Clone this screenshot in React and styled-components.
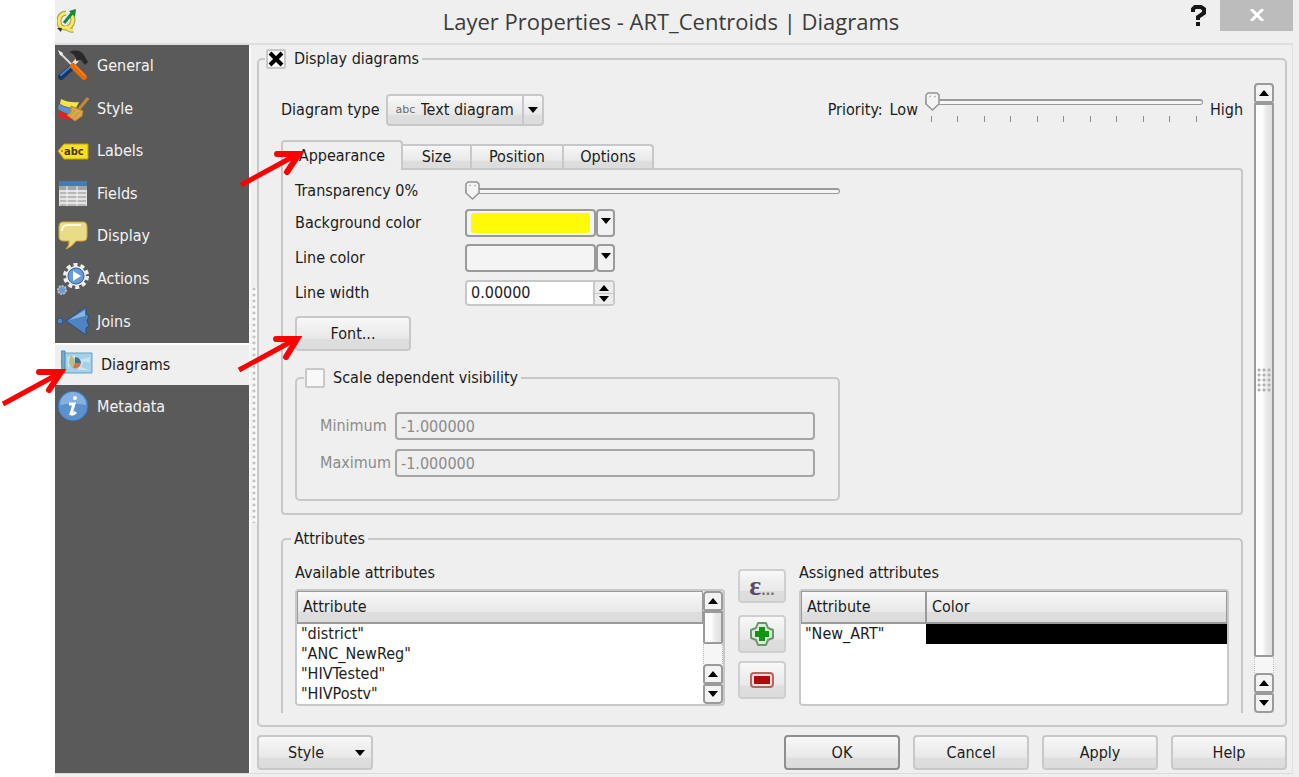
import React, { useState } from 'react';
import styled, { createGlobalStyle, css } from 'styled-components';

const GREY_BG = '#efefef';
const GREY_LINE = '#c8c8ca';
const GREY_EDGE = '#9a9a9a';
const SIDEBAR = '#5a5a5a';
const TEXT = '#1c1c1c';
const RED = '#ff0000';

const raised = 'linear-gradient(#f9f9f9 0%, #f0f0f0 30%, #e9e9e9 65%, #dedede 68%, #dcdcdc 100%)';
const handle = `url("data:image/svg+xml,%3Csvg xmlns='http://www.w3.org/2000/svg' width='15' height='19'%3E%3Cpath d='M3 1H12L14 3V12L7.500 18L1 12V3Z' fill='%23f4f4f4' stroke='%23929292' stroke-width='1.500' stroke-linejoin='round'/%3E%3Cpath d='M4 5l2-1M9 5l2-1' stroke='%23aaa'/%3E%3C/svg%3E")`;
const cross = `url("data:image/svg+xml,%3Csvg xmlns='http://www.w3.org/2000/svg' width='16' height='16'%3E%3Cpath d='M2 2L14 14M14 2L2 14' stroke='%23000' stroke-width='4'/%3E%3C/svg%3E")`;

const GlobalStyle = createGlobalStyle`
  * { box-sizing: border-box; }
  body {
    margin: 0;
    background: #fff;
    color: ${ TEXT };
    font: 16px/20px "DejaVu Sans Condensed", "DejaVu Sans", sans-serif;
    font-stretch: condensed;
  }
  button, input, select { font: inherit; color: inherit; margin: 0; }
`

const Window = styled.div`
  display: flex;
  flex-direction: column;
  min-height: 100vh;
  margin-left: 55px;
  padding: 0 6px 4px 0;
  background: ${ GREY_BG };
`
const TitleBar = styled.header`
  display: grid;
  grid-template-columns: 110px 1fr 116px;
  height: 45px;
  border-bottom: 2px solid #dedede;
`
const Title = styled.h1`
  margin: 0;
  font: 400 22px/43px "Open Sans", "Noto Sans", sans-serif;
  color: #3b3b3b;
  text-align: center;
  white-space: nowrap;
`
const TitleIcon = styled.div`
  padding: 9px 0 0 2px;
`
const TitleButtons = styled.div`
  display: flex;
  justify-content: flex-end;
  align-items: flex-start;
`
const HelpButton = styled.button`
  width: 43px;
  height: 31px;
  padding: 4px 0 0;
  border: 0;
  background: none;
`
const CloseButton = styled.button`
  width: 73px;
  height: 31px;
  padding: 0;
  border: 0;
  background: #bcbcbc;
`
const Body = styled.div`
  display: flex;
  flex: 1;
  border-bottom: 1px solid #dcdcdc;
  border-right: 1px solid #e2e2e2;
`

const Sidebar = styled.nav`
  width: 194px;
  background: ${ SIDEBAR };
`
const NavList = styled.ul`
  display: grid;
  grid-template-rows: repeat(9, 1fr);
  height: 383px;
  margin: 0;
  padding: 0;
  list-style: none;
`
const NavLink = styled.a`
  display: flex;
  align-items: center;
  gap: 8px;
  height: 100%;
  padding-left: 2px;
  color: #f4f4f4;
  text-decoration: none;
  ${ ({ $active }) => $active && css`
    padding-left: 6px;
    background: ${ GREY_BG };
    border-top: 2px solid #fff;
    color: ${ TEXT };
  ` }
`
const Splitter = styled.div`
  display: flex;
  align-items: center;
  width: 8px;
  padding-left: 1px;
  border-left: 2px solid #fafafa;
`
const SplitterDots = styled.div`
  width: 5px;
  height: 236px;
  margin-bottom: 8px;
  background: radial-gradient(circle at 2px 2px, #c4c4c4 1px, #fafafa 2px) 0 0 / 5px 6px;
`
const Content = styled.main`
  flex: 1;
  display: flex;
  flex-direction: column;
  min-width: 0;
  padding: 4px 5px 3px 0;
`

const Group = styled.fieldset`
  min-width: 0;
  margin: 0;
  border: 2px solid ${ GREY_LINE };
  border-radius: 5px;
`
const Legend = styled.legend`
  display: flex;
  align-items: center;
  gap: 8px;
  height: 20px;
  padding: 0 3px 0 1px;
`
const DisplayGroup = styled(Group)`
  flex: 1;
  padding: 14px 11px 12px 22px;
  > legend { margin-left: -16px; }
`
const ScaleGroup = styled(Group)`
  margin-top: 17px;
  padding: 24px 23px 22px;
  > legend { margin-left: -16px; }
`
const AttributesGroup = styled(Group)`
  margin-top: 14px;
  padding: 14px 12px 7px;
  border-bottom: 0;
  border-radius: 5px 5px 0 0;
  > legend { margin-left: -4px; padding-left: 3px; }
`
const CheckBox = styled.input`
  appearance: none;
  width: 20px;
  height: 20px;
  border: 2px solid ${ GREY_LINE };
  border-radius: 2px;
  background: #f8f8f8;
  &:checked { background: #f8f8f8 ${ cross } center no-repeat; }
`
const ScrollArea = styled.div`
  display: flex;
  gap: 11px;
  height: 100%;
`
const Pane = styled.div`
  flex: 1;
  min-width: 0;
`

const TypeRow = styled.div`
  display: flex;
  align-items: center;
  gap: 6px;
  height: 32px;
  margin-top: 11px;
`
const Combo = styled.div`
  display: flex;
  align-items: center;
  width: 158px;
  height: 32px;
  padding-left: 8px;
  border: 2px solid ${ GREY_LINE };
  border-radius: 4px;
  background: ${ raised };
`
const ComboIcon = styled.span`
  width: 20px;
  font: 11px/16px "DejaVu Sans", sans-serif;
  color: #6c6c6c;
`
const ComboSelect = styled.select`
  appearance: none;
  flex: 1;
  min-width: 0;
  padding: 0 0 0 5px;
  border: 0;
  background: none;
`
const ComboArrow = styled.span`
  display: flex;
  align-items: center;
  justify-content: center;
  width: 20px;
  height: 28px;
  border-left: 2px solid ${ GREY_LINE };
`
const Priority = styled.div`
  display: flex;
  align-items: center;
  gap: 7px;
  margin-left: auto;
`
const SliderBox = styled.div`
  width: 278px;
  padding-bottom: 6px;
`
const Range = styled.input`
  appearance: none;
  display: block;
  width: 100%;
  height: 19px;
  background: none;
  &::-webkit-slider-runnable-track {
    height: 6px;
    border: 1px solid ${ GREY_EDGE };
    border-top-width: 2px;
    border-radius: 3px;
    background: #f6f6f6;
  }
  &::-webkit-slider-thumb {
    appearance: none;
    width: 15px;
    height: 19px;
    margin: -9px 0 0 -1px;
    background: ${ handle } no-repeat;
  }
`
const Ticks = styled.div`
  display: flex;
  justify-content: space-between;
  margin-top: 5px;
  padding: 0 6px;
`
const Tick = styled.span`
  width: 1px;
  height: 6px;
  background: #8c8c8c;
`

const TabList = styled.div`
  display: flex;
  align-items: flex-end;
  height: 29px;
  margin-top: 13px;
`
const Tab = styled.button`
  width: ${ ({ $width }) => $width }px;
  height: 24px;
  padding: 0;
  border: 2px solid ${ GREY_LINE };
  border-width: 2px 2px 0 0;
  background: ${ raised };
  &:last-child { border-radius: 0 4px 0 0; }
  ${ ({ $active }) => $active && css`
    position: relative;
    height: 30px;
    margin-bottom: -2px;
    border-left-width: 2px;
    border-radius: 4px 4px 0 0;
    background: ${ GREY_BG };
  ` }
`
const TabPanel = styled.div`
  padding: 10px 12px 12px;
  border: 2px solid ${ GREY_LINE };
  border-radius: 0 4px 4px 4px;
`
const PanelForm = styled.div`
  max-width: 545px;
`
const FieldGrid = styled.div`
  display: grid;
  grid-template-columns: 170px 1fr;
  grid-template-rows: 22px 28px 28px 28px;
  gap: 7px 0;
  align-items: center;
`
const ColorField = styled.div`
  display: flex;
`
const ColorButton = styled.button`
  width: 131px;
  height: 28px;
  padding: 2px 4px;
  border: 2px solid ${ GREY_EDGE };
  border-radius: 4px;
  background: #f4f4f4;
`
const Swatch = styled.span`
  display: block;
  height: 20px;
  border-radius: 3px;
  background: ${ ({ $color }) => $color };
`
const ColorMenu = styled.button`
  display: flex;
  align-items: center;
  justify-content: center;
  width: 19px;
  height: 28px;
  padding: 0 0 4px;
  border: 2px solid ${ GREY_EDGE };
  border-radius: 4px;
  background: #f2f2f2;
`
const SpinBox = styled.div`
  display: flex;
  width: 150px;
  height: 26px;
  border: 2px solid ${ GREY_LINE };
  border-radius: 4px;
  background: #fff;
`
const SpinInput = styled.input`
  flex: 1;
  min-width: 0;
  padding: 0 4px;
  border: 0;
  background: none;
`
const SpinButtons = styled.div`
  display: grid;
  grid-template-rows: 1fr 1fr;
  width: 20px;
  border-left: 2px solid ${ GREY_LINE };
  background: #ededed;
`
const SpinButton = styled.button`
  display: flex;
  align-items: center;
  justify-content: center;
  padding: 0;
  border: 0;
  background: none;
  & + & { border-top: 1px solid ${ GREY_LINE }; }
`
const PushButton = styled.button`
  width: 116px;
  height: 35px;
  padding: 0;
  border: 2px solid ${ ({ $primary }) => ($primary ? '#8f8f8f' : GREY_LINE) };
  border-radius: 4px;
  background: ${ raised };
`
const FontButton = styled(PushButton)`
  display: block;
  margin-top: 9px;
`
const MenuButton = styled(PushButton)`
  display: flex;
  align-items: center;
  justify-content: space-between;
  margin-right: auto;
  padding: 0 6px 0 29px;
`
const LimitRow = styled.div`
  display: grid;
  grid-template-columns: 75px 1fr;
  align-items: center;
  color: #8b8b8b;
  & + & { margin-top: 9px; }
`
const LimitInput = styled.input`
  width: 100%;
  height: 28px;
  padding: 0 4px;
  border: 2px solid #a6a6a6;
  border-radius: 4px;
  background: ${ GREY_BG };
`

const AttributeGrid = styled.div`
  display: grid;
  grid-template-columns: 1fr 48px 1fr;
  gap: 13px;
`
const TableBox = styled.div`
  display: flex;
  align-items: flex-start;
  height: 117px;
  margin-top: 6px;
  border: 2px solid ${ GREY_LINE };
  border-radius: 4px;
  background: #fff;
`
const Table = styled.table`
  flex: 1;
  width: 100%;
  border-collapse: separate;
  border-spacing: 0;
  table-layout: fixed;
`
const TH = styled.th`
  width: ${ ({ $width }) => $width || 'auto' };
  height: 33px;
  padding: 0 5px;
  border: 1px solid ${ GREY_EDGE };
  border-bottom-width: 2px;
  background: ${ raised };
  font-weight: 400;
  text-align: left;
`
const TD = styled.td`
  height: 20px;
  padding: 0 4px;
  line-height: 20px;
  background: ${ ({ $fill }) => $fill || 'none' };
`
const ToolColumn = styled.div`
  display: flex;
  flex-direction: column;
  gap: 8px;
  padding-top: 6px;
`
const ToolButton = styled.button`
  display: flex;
  align-items: center;
  justify-content: center;
  height: 38px;
  padding: 0;
  border: 2px solid #cfcfcf;
  border-radius: 4px;
  background: ${ raised };
  &:first-child { height: 34px; margin-bottom: 4px; }
`
const Epsilon = styled.span`
  font: 700 28px/28px "Liberation Serif", serif;
  color: #5a4a63;
  small { font: 700 16px/16px "Liberation Sans", sans-serif; color: #777; }
`

const Bar = styled.div`
  display: flex;
  flex: none;
  flex-direction: column;
  align-self: stretch;
  width: 20px;
`
const BarButton = styled.button`
  display: flex;
  align-items: center;
  justify-content: center;
  flex: none;
  height: 20px;
  padding: 0;
  border: 2px solid ${ GREY_EDGE };
  border-radius: 4px 4px 2px 2px;
  background: #f3f3f3;
  &:last-child { border-radius: 2px 2px 4px 4px; }
`
const BarThumb = styled.div`
  display: flex;
  flex: ${ ({ $size }) => ($size ? `0 0 ${ $size }px` : '1') };
  align-items: center;
  justify-content: center;
  border: 2px solid ${ GREY_EDGE };
  border-radius: 0 0 2px 2px;
  background: linear-gradient(90deg, #fcfcfc 40%, #ececec 60%, #e0e0e0);
`
const BarTrack = styled.div`
  flex: ${ ({ $size }) => ($size ? `0 0 ${ $size }px` : '1') };
  border: 1px dotted #c0c0c0;
  border-width: 0 1px;
  background: #f6f6f6;
`
const Grip = styled.span`
  width: 15px;
  height: 25px;
  background: radial-gradient(circle at 2px 2px, #b0b0b0 1px, transparent 2px) 0 0 / 5px 5px;
`
const Footer = styled.footer`
  display: flex;
  gap: 13px;
  margin-top: 8px;
`
const Annotations = styled.svg`
  position: absolute;
  top: 0;
  left: 0;
  pointer-events: none;
`

const Arrow = ({ up }) => (
  <svg width="10" height="6" viewBox="0 0 10 6" aria-hidden="true">
    <path d={up ? 'M5 0 10 6H0Z' : 'M0 0H10L5 6Z'} fill="#000" />
  </svg>
)

const icons = {
  General: (
    <>
      <path d="M3 3 17 17" stroke="#d8d8d8" strokeWidth="2" />
      <path d="M1 0 6 3 5 6 3 5Z" fill="#eee" />
      <path d="M14 17 21 9" stroke="#e4e4e4" strokeWidth="4" />
      <path d="M12 2Q22-2 27 5L31 12 28 15 24 10 19 11Q20 5 12 2Z" fill="#292929" />
      <path d="M14 18 4 27" stroke="#183766" strokeWidth="6" strokeLinecap="round" />
      <path d="M13 17 4 25" stroke="#4e7fc2" strokeWidth="2" strokeLinecap="round" />
      <path d="M16 16 27 27" stroke="#e56b0b" strokeWidth="6" strokeLinecap="round" />
      <path d="M18 15 28 26" stroke="#ff9b32" strokeWidth="1" />
    </>
  ),
  Style: (
    <>
      <path d="M4 6Q12 10 22 9L19 15Q10 15 3 11Z" fill="#f8e445" />
      <path d="M2 11Q9 16 18 15L15 21Q8 21 1 16Z" fill="#5c8fd0" />
      <path d="M2 18Q8 22 17 20L19 26Q7 27 1 23Z" fill="#e3221f" />
      <path d="M31 5 22 16" stroke="#c08a3c" strokeWidth="3" />
      <path d="M14 13 26 18 25 23 18 28 10 22 14 19Z" fill="#d8a64f" stroke="#b58638" />
      <path d="M13 22 18 17M17 25 22 19" stroke="#c18d3d" />
    </>
  ),
  Labels: (
    <>
      <path d="M1 16 7 9H31V24H7Z" fill="#f7e127" stroke="#c99f0c" />
      <circle cx="5" cy="16" r="1" fill="#a88408" />
      <text x="7" y="20" fontFamily="DejaVu Sans, sans-serif" fontSize="11" fontWeight="700" fill="#47370a">abc</text>
    </>
  ),
  Fields: (
    <>
      <path d="M2 5H30V28H2Z" fill="#e4e4e4" />
      <path d="M2 3H30V8H2Z" fill="#4779b4" />
      <path d="M2 8H30V12H2Z" fill="#a4a4a4" />
      <path d="M3 15H29M3 19H29M3 23H29M3 27H29" stroke="#b8b8b8" strokeWidth="2" />
      <path d="M10 8V28M20 8V28" stroke="#f5f5f5" />
    </>
  ),
  Display: (
    <>
      <path d="M6 2H26Q30 2 30 7V17Q30 21 26 21H19Q16 26 9 29Q13 25 12 21H7Q2 21 2 17V7Q2 2 6 2Z" fill="#e9dc86" stroke="#d3a739" />
      <path d="M5 11Q5 5 11 5H24" fill="none" stroke="#fffbe0" strokeWidth="2" />
    </>
  ),
  Actions: (
    <>
      <circle cx="19" cy="13" r="11" fill="none" stroke="#f0f0f0" strokeWidth="4" strokeDasharray="4 3" />
      <circle cx="19" cy="13" r="10" fill="#eee" />
      <circle cx="19" cy="13" r="8" fill="#6a9bd3" stroke="#2e629d" />
      <path d="M16 8 24 13 16 18Z" fill="#fff" />
      <circle cx="5" cy="27" r="4" fill="#6a9bd3" stroke="#bababa" strokeWidth="2" strokeDasharray="2 1" />
    </>
  ),
  Joins: (
    <>
      <circle cx="3" cy="15" r="3" fill="#4e86c8" stroke="#244f87" />
      <path d="M9 15 29 1V8L32 10 30 15 32 20 29 22V29Z" fill="#4f83c3" stroke="#264f86" />
      <path d="M12 14 28 4V10Z" fill="#8bb4e2" />
    </>
  ),
  Diagrams: (
    <>
      <path d="M3 4H31V24H3Z" fill="#a6d0e8" stroke="#6d9fbe" />
      <path d="M0 2H4V24H1Z" fill="#70abcf" stroke="#5387aa" />
      <path d="M6 8 14 6 18 11 29 8V14L23 12 20 18 29 21H18L13 15 7 19Z" fill="#c3e4f2" />
      <path d="M10 6 16 13 12 19Q5 15 10 6Z" fill="#bbbe88" />
      <path d="M14 8A6 6 0 0 1 20 14H14Z" fill="#3b7195" />
      <path d="M14 14H20A6 6 0 0 1 12 19Z" fill="#c67650" />
    </>
  ),
  Metadata: (
    <>
      <circle cx="16" cy="15" r="15" fill="#5b91cf" stroke="#3670b4" />
      <path d="M3 14A13 13 0 0 1 29 14Q16 11 3 14Z" fill="#86b0df" />
      <circle cx="18" cy="7" r="2" fill="#fff" />
      <path d="M12 13H17L14 23Q16 24 19 21" fill="none" stroke="#fff" strokeWidth="3" />
    </>
  ),
}

const tabs = [
  { name: 'Appearance', width: 122 },
  { name: 'Size', width: 69 },
  { name: 'Position', width: 92 },
  { name: 'Options', width: 90 },
]

const available = ['"district"', '"ANC_NewReg"', '"HIVTested"', '"HIVPostv"']

const ScrollBar = ({ thumb, track, grip }) => (
  <Bar>
    <BarButton aria-label="Scroll up"><Arrow up /></BarButton>
    <BarThumb $size={thumb}>{ grip && <Grip /> }</BarThumb>
    <BarTrack $size={track} />
    <BarButton aria-label="Scroll up"><Arrow up /></BarButton>
    <BarButton aria-label="Scroll down"><Arrow /></BarButton>
  </Bar>
)

const ColorPicker = ({ id, color, label }) => (
  <ColorField>
    <ColorButton id={id}><Swatch $color={color} /></ColorButton>
    <ColorMenu aria-label={`${ label } menu`}><Arrow /></ColorMenu>
  </ColorField>
)

const Slider = ({ ticks, ...props }) => (
  <>
    <Range type="range" min="0" defaultValue="0" {...props} />
    { ticks && <Ticks>{ Array.from({ length: ticks }, (_, i) => <Tick key={i} />) }</Ticks> }
  </>
)

const Appearance = () => (
  <PanelForm>
    <FieldGrid>
      <label htmlFor="transparency">Transparency 0%</label>
      <Slider id="transparency" max="100" />
      <label htmlFor="background">Background color</label>
      <ColorPicker id="background" label="Background color" color="#fffb08" />
      <label htmlFor="line">Line color</label>
      <ColorPicker id="line" label="Line color" color="transparent" />
      <label htmlFor="width">Line width</label>
      <SpinBox>
        <SpinInput id="width" defaultValue="0.00000" />
        <SpinButtons>
          <SpinButton aria-label="Increase"><Arrow up /></SpinButton>
          <SpinButton aria-label="Decrease"><Arrow /></SpinButton>
        </SpinButtons>
      </SpinBox>
    </FieldGrid>
    <FontButton>Font...</FontButton>
    <ScaleGroup>
      <Legend>
        <CheckBox type="checkbox" id="scale" />
        <label htmlFor="scale">Scale dependent visibility</label>
      </Legend>
      {
        ['Minimum', 'Maximum'].map(name => (
          <LimitRow key={name}>
            <label htmlFor={name}>{ name }</label>
            <LimitInput id={name} defaultValue="-1.000000" disabled />
          </LimitRow>
        ))
      }
    </ScaleGroup>
  </PanelForm>
)

const Attributes = () => (
  <AttributesGroup>
    <Legend>Attributes</Legend>
    <AttributeGrid>
      <div>
        <div id="available">Available attributes</div>
        <TableBox>
          <Table aria-labelledby="available">
            <thead><tr><TH>Attribute</TH></tr></thead>
            <tbody>
              { available.map(item => <tr key={item}><TD>{ item }</TD></tr>) }
            </tbody>
          </Table>
          <ScrollBar thumb={33} />
        </TableBox>
      </div>
      <ToolColumn>
        <ToolButton aria-label="Add expression"><Epsilon>ε<small>...</small></Epsilon></ToolButton>
        <ToolButton aria-label="Add attribute">
          <svg width="24" height="24" viewBox="0 0 24 24">
            <path d="M8 1H16L18 6 23 8V16L18 18 16 23H8L6 18 1 16V8L6 6Z" fill="#d9eed7" stroke="#6d9270" strokeWidth="2" strokeLinejoin="round" />
            <path d="M9 5H15V9H19V15H15V19H9V15H5V9H9Z" fill="#129312" />
          </svg>
        </ToolButton>
        <ToolButton aria-label="Remove attribute">
          <svg width="24" height="16" viewBox="0 0 24 16">
            <rect x="1" y="1" width="22" height="14" rx="3" fill="#f7dddd" stroke="#b5655f" strokeWidth="2" />
            <path d="M4 4H20V12H4Z" fill="#ae0b0b" />
          </svg>
        </ToolButton>
      </ToolColumn>
      <div>
        <div id="assigned">Assigned attributes</div>
        <TableBox>
          <Table aria-labelledby="assigned">
            <thead><tr><TH $width="125px">Attribute</TH><TH>Color</TH></tr></thead>
            <tbody><tr><TD>"New_ART"</TD><TD $fill="#000" /></tr></tbody>
          </Table>
        </TableBox>
      </div>
    </AttributeGrid>
  </AttributesGroup>
)

export default function App() {
  const [tab, setTab] = useState('Appearance')

  return (
    <>
      <GlobalStyle />
      <Window>
        <TitleBar>
          <TitleIcon>
            <svg width="20" height="25" viewBox="0 0 20 25">
              <path d="M9 4Q2 5 2 12Q2 19 8 19Q15 19 16 11L15 6M8 17Q12 22 16 21" fill="none" stroke="#a8993a" strokeWidth="5" />
              <path d="M9 4Q2 5 2 12Q2 19 8 19Q15 19 16 11L15 6M8 17Q12 22 16 21" fill="none" stroke="#f4e866" strokeWidth="3" />
              <path d="M7 14 16 3" stroke="#168b35" strokeWidth="3" />
              <path d="M12 2 19 0 18 8Z" fill="#168b35" />
              <path d="M0 19 5 19 4 23Z" fill="#333" />
            </svg>
          </TitleIcon>
          <Title>Layer Properties - ART_Centroids | Diagrams</Title>
          <TitleButtons>
            <HelpButton aria-label="Help">
              <svg width="15" height="21" viewBox="0 0 15 21">
                <path d="M2 7V4L4 2H10L13 4V8L7 12V15" fill="none" stroke="#161616" strokeWidth="4" />
                <path d="M5 17H9V21H5Z" fill="#161616" />
              </svg>
            </HelpButton>
            <CloseButton aria-label="Close">
              <svg width="14" height="12" viewBox="0 0 14 12">
                <path d="M1 0 13 12M13 0 1 12" stroke="#fff" strokeWidth="3" />
              </svg>
            </CloseButton>
          </TitleButtons>
        </TitleBar>
        <Body>
          <Sidebar>
            <NavList>
              {
                Object.keys(icons).map(name => (
                  <li key={name}>
                    <NavLink href={`#${ name }`} $active={name === 'Diagrams'}>
                      <svg width="32" height="32" viewBox="0 0 32 32" aria-hidden="true">{ icons[name] }</svg>
                      { name }
                    </NavLink>
                  </li>
                ))
              }
            </NavList>
          </Sidebar>
          <Splitter><SplitterDots /></Splitter>
          <Content>
            <DisplayGroup>
              <Legend>
                <CheckBox type="checkbox" id="display" defaultChecked />
                <label htmlFor="display">Display diagrams</label>
              </Legend>
              <ScrollArea>
                <Pane>
                  <TypeRow>
                    <label htmlFor="type">Diagram type</label>
                    <Combo>
                      <ComboIcon>abc</ComboIcon>
                      <ComboSelect id="type"><option>Text diagram</option></ComboSelect>
                      <ComboArrow><Arrow /></ComboArrow>
                    </Combo>
                    <Priority>
                      <label htmlFor="priority">Priority:</label>
                      <span>Low</span>
                      <SliderBox><Slider id="priority" max="10" ticks={11} /></SliderBox>
                      <span>High</span>
                    </Priority>
                  </TypeRow>
                  <TabList role="tablist">
                    {
                      tabs.map(({ name, width }) => (
                        <Tab
                          key={name}
                          role="tab"
                          aria-selected={tab === name}
                          $active={tab === name}
                          $width={width}
                          onClick={() => setTab(name)}
                        >
                          { name }
                        </Tab>
                      ))
                    }
                  </TabList>
                  <TabPanel role="tabpanel">
                    { tab === 'Appearance' && <Appearance /> }
                  </TabPanel>
                  <Attributes />
                </Pane>
                <ScrollBar track={16} grip />
              </ScrollArea>
            </DisplayGroup>
            <Footer>
              <MenuButton>Style <Arrow /></MenuButton>
              <PushButton $primary>OK</PushButton>
              <PushButton>Cancel</PushButton>
              <PushButton>Apply</PushButton>
              <PushButton>Help</PushButton>
            </Footer>
          </Content>
        </Body>
      </Window>
      <Annotations width="310" height="420" fill="none" stroke={RED} strokeWidth="5">
        <path d="M3 404 60 373M241 185 298 154M239 370 296 339" />
        <g strokeWidth="6" strokeLinecap="round">
          <path d="M39 372 61 372 49 390" />
          <path d="M277 154 299 154 287 172" />
          <path d="M276 339 297 339 286 357" />
        </g>
      </Annotations>
    </>
  )
}
